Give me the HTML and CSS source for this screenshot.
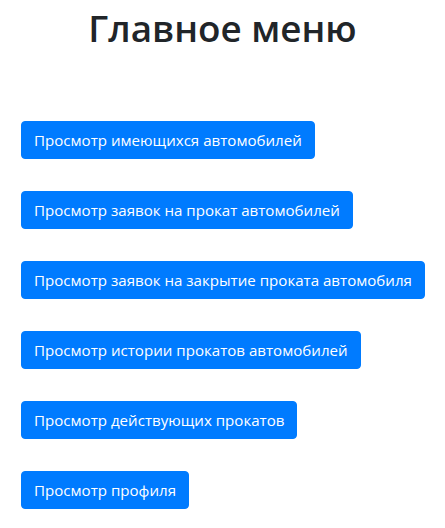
FILE: index.html
```html
<!DOCTYPE html>
<html lang="ru">
<head>
<meta charset="utf-8">
<title>Главное меню</title>
<link rel="stylesheet" href="styles.css">
</head>
<body>
<div class="page">
  <h1 class="title">Главное меню</h1>
  <div class="menu">
    <a class="btn" href="#">Просмотр имеющихся автомобилей</a>
    <a class="btn" href="#">Просмотр заявок на прокат автомобилей</a>
    <a class="btn" href="#">Просмотр заявок на закрытие проката автомобиля</a>
    <a class="btn" href="#">Просмотр истории прокатов автомобилей</a>
    <a class="btn" href="#">Просмотр действующих прокатов</a>
    <a class="btn" href="#">Просмотр профиля</a>
  </div>
</div>
</body>
</html>
```

FILE: styles.css
```css
html, body {
  margin: 0;
  padding: 0;
  background: #fff;
}
body {
  font-family: "Open Sans", "Noto Sans", "DejaVu Sans", sans-serif;
  color: #212529;
}
.page {
  padding: 0 21px;
}
.title {
  margin: 0;
  padding-top: 4px;
  font-size: 36.8px;
  line-height: 48px;
  font-weight: 600;
  text-align: center;
  color: #212529;
}
.menu {
  display: flex;
  flex-direction: column;
  align-items: flex-start;
  gap: 32px;
  margin-top: 69px;
}
.btn {
  display: inline-block;
  padding: 6px 12px;
  font-size: 15.1px;
  line-height: 24px;
  color: #fff;
  background: #007bff;
  border: 1px solid #007bff;
  border-radius: 4px;
  text-decoration: none;
  white-space: nowrap;
}
```
